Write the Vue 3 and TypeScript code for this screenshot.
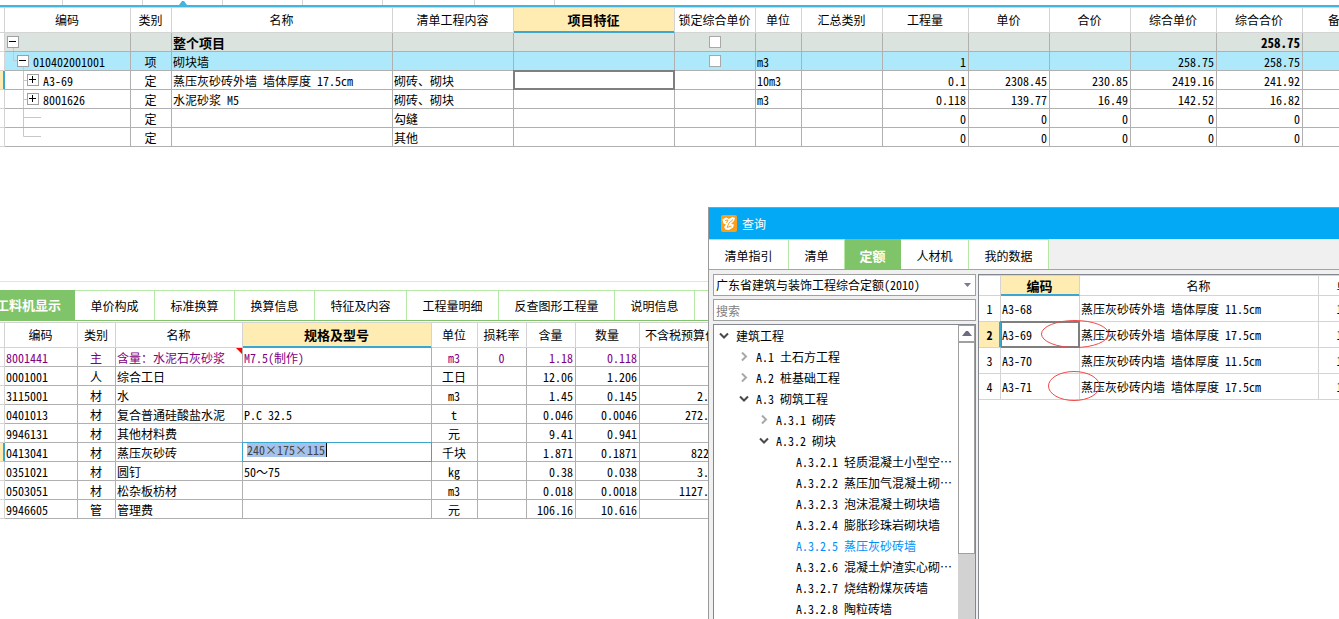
<script setup lang="ts">
import { ref } from 'vue'

interface Column {
  title: string
  align?: 'left' | 'center' | 'right'
  active?: boolean
}

interface BudgetRow {
  kind?: 'root' | 'item'
  level: number
  node: 'open' | 'closed' | 'leaf'
  guide: string
  code: string
  cells: string[]
  current?: boolean
  lockable?: boolean
}

interface MaterialRow {
  code: string
  cells: string[]
  tone?: string
  current?: boolean
}

interface TreeNode {
  label: string
  level: number
  state: 'open' | 'closed' | 'leaf'
  selected?: boolean
}

const stripTabs = ['a', 'b', 'c', 'd', 'e', 'f', 'g']

const budgetColumns: Column[] = [
  { title: '类别', align: 'center' },
  { title: '名称' },
  { title: '清单工程内容' },
  { title: '项目特征', active: true },
  { title: '锁定综合单价', align: 'center' },
  { title: '单位' },
  { title: '汇总类别' },
  { title: '工程量', align: 'right' },
  { title: '单价', align: 'right' },
  { title: '合价', align: 'right' },
  { title: '综合单价', align: 'right' },
  { title: '综合合价', align: 'right' },
  { title: '备注' },
]

const budgetRows: BudgetRow[] = [
  { kind: 'root', level: 0, node: 'open', guide: 'M8.5 15V18', code: '', lockable: true,
    cells: ['', '整个项目', '', '', '', '', '', '', '', '', '', '258.75', ''] },
  { kind: 'item', level: 1, node: 'open', guide: 'M8.5 0V8.5H12M18.5 15V18', code: '010402001001', lockable: true,
    cells: ['项', '砌块墙', '', '', '', 'm3', '', '1', '', '', '258.75', '258.75', ''] },
  { level: 2, node: 'closed', guide: 'M18.5 0V18M18.5 9.5H22', code: 'A3-69', current: true,
    cells: ['定', '蒸压灰砂砖外墙 墙体厚度 17.5cm', '砌砖、砌块', '', '', '10m3', '', '0.1', '2308.45', '230.85', '2419.16', '241.92', ''] },
  { level: 2, node: 'closed', guide: 'M18.5 0V18M18.5 9.5H22', code: '8001626',
    cells: ['定', '水泥砂浆 M5', '砌砖、砌块', '', '', 'm3', '', '0.118', '139.77', '16.49', '142.52', '16.82', ''] },
  { level: 2, node: 'leaf', guide: 'M18.5 0V18M18.5 8.5H36', code: '',
    cells: ['定', '', '勾缝', '', '', '', '', '0', '0', '0', '0', '0', ''] },
  { level: 2, node: 'leaf', guide: 'M18.5 0V8.5H36', code: '',
    cells: ['定', '', '其他', '', '', '', '', '0', '0', '0', '0', '0', ''] },
]

const detailTabs = ['工料机显示', '单价构成', '标准换算', '换算信息', '特征及内容', '工程量明细', '反查图形工程量', '说明信息']

const materialColumns: Column[] = [
  { title: '类别', align: 'center' },
  { title: '名称' },
  { title: '规格及型号', active: true },
  { title: '单位', align: 'center' },
  { title: '损耗率', align: 'center' },
  { title: '含量', align: 'right' },
  { title: '数量', align: 'right' },
  { title: '不含税预算价', align: 'right' },
]

const materialRows: MaterialRow[] = [
  { code: '8001441', tone: 'mix', cells: ['主', '含量：水泥石灰砂浆', 'M7.5(制作)', 'm3', '0', '1.18', '0.118', ''] },
  { code: '0001001', cells: ['人', '综合工日', '', '工日', '', '12.06', '1.206', ''] },
  { code: '3115001', cells: ['材', '水', '', 'm3', '', '1.45', '0.145', '2.80'] },
  { code: '0401013', cells: ['材', '复合普通硅酸盐水泥', 'P.C 32.5', 't', '', '0.046', '0.0046', '272.80'] },
  { code: '9946131', cells: ['材', '其他材料费', '', '元', '', '9.41', '0.941', ''] },
  { code: '0413041', current: true, cells: ['材', '蒸压灰砂砖', '', '千块', '', '1.871', '0.1871', '822.5'] },
  { code: '0351021', cells: ['材', '圆钉', '50～75', 'kg', '', '0.38', '0.038', '3.80'] },
  { code: '0503051', cells: ['材', '松杂板枋材', '', 'm3', '', '0.018', '0.0018', '1127.80'] },
  { code: '9946605', cells: ['管', '管理费', '', '元', '', '106.16', '10.616', ''] },
]

const queryTabs = ['清单指引', '清单', '定额', '人材机', '我的数据']

const treeNodes: TreeNode[] = [
  { label: '建筑工程', level: 0, state: 'open' },
  { label: 'A.1 土石方工程', level: 1, state: 'closed' },
  { label: 'A.2 桩基础工程', level: 1, state: 'closed' },
  { label: 'A.3 砌筑工程', level: 1, state: 'open' },
  { label: 'A.3.1 砌砖', level: 2, state: 'closed' },
  { label: 'A.3.2 砌块', level: 2, state: 'open' },
  { label: 'A.3.2.1 轻质混凝土小型空⋯', level: 3, state: 'leaf' },
  { label: 'A.3.2.2 蒸压加气混凝土砌⋯', level: 3, state: 'leaf' },
  { label: 'A.3.2.3 泡沫混凝土砌块墙', level: 3, state: 'leaf' },
  { label: 'A.3.2.4 膨胀珍珠岩砌块墙', level: 3, state: 'leaf' },
  { label: 'A.3.2.5 蒸压灰砂砖墙', level: 3, state: 'leaf', selected: true },
  { label: 'A.3.2.6 混凝土炉渣实心砌⋯', level: 3, state: 'leaf' },
  { label: 'A.3.2.7 烧结粉煤灰砖墙', level: 3, state: 'leaf' },
  { label: 'A.3.2.8 陶粒砖墙', level: 3, state: 'leaf' },
]

const quotaRows = [
  { code: 'A3-68', name: '蒸压灰砂砖外墙 墙体厚度 11.5cm' },
  { code: 'A3-69', name: '蒸压灰砂砖外墙 墙体厚度 17.5cm' },
  { code: 'A3-70', name: '蒸压灰砂砖内墙 墙体厚度 11.5cm' },
  { code: 'A3-71', name: '蒸压灰砂砖内墙 墙体厚度 17.5cm' },
]

const spec = ref('240×175×115')
const keyword = ref('')
const detailTab = ref('工料机显示')
const queryTab = ref('定额')
const currentQuota = ref('A3-69')
</script>

<template>
  <main class="page">
    <section class="budget">
      <div class="strip">
        <span v-for="(t, i) in stripTabs" :key="t" class="strip-tab" :class="'strip-' + t">
          <svg v-if="i === 2" class="marker" width="8" height="4" viewBox="0 0 8 4"><path d="M0 4L3 0H5L8 4Z" fill="#41b4e0" /></svg>
        </span>
      </div>
      <table class="grid budget-grid">
        <colgroup>
          <col class="w5" /><col class="w126" /><col class="w41" /><col class="w221" /><col class="w121" />
          <col class="w161" /><col class="w81" /><col class="w46" /><col class="w81" /><col class="w86" />
          <col class="w81" /><col class="w81" /><col class="w86" /><col class="w86" /><col class="w76" />
        </colgroup>
        <thead>
          <tr>
            <th></th>
            <th>编码</th>
            <th v-for="c in budgetColumns" :key="c.title" :class="{ active: c.active }">{{ c.title }}</th>
          </tr>
        </thead>
        <tbody>
          <tr v-for="(r, ri) in budgetRows" :key="ri" :class="[r.kind, { current: r.current }]">
            <td class="gutter"></td>
            <td class="node">
              <svg class="guide" width="60" height="18" viewBox="0 0 60 18"><path :d="r.guide" fill="none" stroke="#c8c8c8" /></svg>
              <div class="node-line" :class="'level-' + r.level">
                <button v-if="r.node !== 'leaf'" class="expander" type="button" :aria-label="r.node === 'open' ? '折叠' : '展开'">
                  <svg width="10" height="10" viewBox="0 0 10 10"><path :d="r.node === 'open' ? 'M1 4.5H8' : 'M1 4.5H8M4.5 1V8'" fill="none" stroke="#000" /></svg>
                </button>
                <span class="node-code">{{ r.code }}</span>
              </div>
            </td>
            <td v-for="(v, ci) in r.cells" :key="ci" :class="[budgetColumns[ci].align, { focus: r.current && budgetColumns[ci].active, check: r.lockable && ci === 4 }]">
              <input v-if="r.lockable && ci === 4" class="tick" type="checkbox" aria-label="锁定综合单价" />
              <template v-else>{{ v }}</template>
            </td>
          </tr>
        </tbody>
      </table>
    </section>

    <section class="detail">
      <nav class="tabs detail-tabs">
        <button v-for="(t, i) in detailTabs" :key="t" type="button" class="tab" :class="['dt-' + i, { on: t === detailTab }]" @click="detailTab = t">{{ t }}</button>
      </nav>
      <table class="grid material-grid">
        <colgroup>
          <col class="w5" /><col class="w73" /><col class="w38" /><col class="w127" /><col class="w189" />
          <col class="w46" /><col class="w49" /><col class="w49" /><col class="w64" /><col class="w84" />
        </colgroup>
        <thead>
          <tr>
            <th></th>
            <th>编码</th>
            <th v-for="c in materialColumns" :key="c.title" :class="{ active: c.active }">{{ c.title }}</th>
          </tr>
        </thead>
        <tbody>
          <tr v-for="r in materialRows" :key="r.code" :class="[r.tone, { current: r.current }]">
            <td class="gutter"></td>
            <td>{{ r.code }}</td>
            <td v-for="(v, ci) in r.cells" :key="ci" :class="[materialColumns[ci].align, { edit: r.current && ci === 2, note: r.tone && ci === 1 }]">
              <input v-if="r.current && ci === 2" v-model="spec" class="spec" type="text" aria-label="规格及型号" />
              <template v-else>{{ v }}</template>
            </td>
          </tr>
        </tbody>
      </table>
    </section>

    <section class="dialog" role="dialog" aria-label="查询">
      <header class="title">
        <svg width="16" height="17" viewBox="0 0 16 17">
          <rect width="16" height="17" rx="2" fill="#f8a01c" />
          <path d="M1.5 4.5L5 2.5L8 4L11.5 2L14 3L13 6L10 9L13 9.5L12 12.5L8 15L4.5 14.5L3 12L5 9.5L2.5 8.5Z" fill="#fff" />
          <path d="M4 5.5L7 5L5.5 8M12 4.5L8 8L6 12.5L10.5 11" fill="none" stroke="#f8a01c" />
        </svg>
        <span>查询</span>
      </header>
      <nav class="tabs query-tabs">
        <button v-for="(t, i) in queryTabs" :key="t" type="button" class="tab" :class="['qt-' + i, { on: t === queryTab }]" @click="queryTab = t">{{ t }}</button>
      </nav>
      <div class="body">
        <div class="side">
          <div class="combo">
            <select aria-label="定额库">
              <option>广东省建筑与装饰工程综合定额(2010)</option>
            </select>
            <svg width="7" height="4" viewBox="0 0 7 4"><path d="M0 0H7L3.5 4Z" fill="#7a7a8a" /></svg>
          </div>
          <input v-model="keyword" class="search" type="text" placeholder="搜索" aria-label="搜索" />
          <div class="tree-box">
            <ul class="tree">
              <li v-for="n in treeNodes" :key="n.label" :class="['depth-' + n.level, { picked: n.selected }]">
                <svg class="chev" width="10" height="10" viewBox="0 0 10 10">
                  <path v-if="n.state === 'open'" d="M1 2.5L5 6.5L9 2.5" fill="none" stroke="#4a4a4a" stroke-width="2" />
                  <path v-else-if="n.state === 'closed'" d="M3 0.5L7 4.5L3 8.5" fill="none" stroke="#a8a8a8" stroke-width="2" />
                </svg>
                <span>{{ n.label }}</span>
              </li>
            </ul>
            <div class="bar">
              <button class="bar-up" type="button" aria-label="向上滚动">
                <svg width="10" height="5" viewBox="0 0 10 5"><path d="M0 5L4 0H6L10 5Z" fill="#6c6c80" /></svg>
              </button>
              <div class="thumb"></div>
            </div>
          </div>
        </div>
        <div class="results">
          <table class="grid quota-grid">
            <colgroup><col class="w22" /><col class="w79" /><col class="w239" /><col class="w61" /></colgroup>
            <thead>
              <tr>
                <th></th>
                <th class="active">编码</th>
                <th>名称</th>
                <th>单位</th>
              </tr>
            </thead>
            <tbody>
              <tr v-for="(q, i) in quotaRows" :key="q.code" :class="{ current: q.code === currentQuota }" @click="currentQuota = q.code">
                <td class="gutter center">{{ i + 1 }}</td>
                <td :class="{ focus: q.code === currentQuota }">{{ q.code }}</td>
                <td>{{ q.name }}</td>
                <td class="center">10m3</td>
              </tr>
            </tbody>
          </table>
          <svg class="marks" width="70" height="84" viewBox="0 0 70 84">
            <ellipse cx="34" cy="15" rx="33.5" ry="13.5" fill="none" stroke="#ee4a4a" />
            <ellipse cx="33" cy="67" rx="25.5" ry="14.5" fill="none" stroke="#ee4a4a" />
          </svg>
        </div>
      </div>
    </section>
  </main>
</template>

<style>
body {
  margin: 0;
  background: #fff;
}
</style>

<style scoped>
.page {
  position: relative;
  min-height: 100vh;
  overflow: hidden;
  background: #fff;
  color: #000;
  font: 12px/18px "Noto Sans Mono CJK SC", "Noto Sans CJK SC", sans-serif;
}
.page * {
  box-sizing: border-box;
}
button,
input,
select {
  margin: 0;
  padding: 0;
  border: 0;
  border-radius: 0;
  background: transparent;
  color: inherit;
  font: inherit;
  appearance: none;
}
svg {
  display: block;
  flex: none;
}

/* upper tab strip */
.strip {
  display: flex;
  height: 7px;
  border-bottom: 2px solid #41b4e0;
}
.strip-tab {
  display: flex;
  justify-content: center;
  align-items: flex-end;
  flex: none;
  width: 80px;
  border-right: 1px solid #d4d4d4;
}
.strip-a {
  width: 63px;
}
.strip-f {
  width: 92px;
}

/* grids */
.grid {
  table-layout: fixed;
  border-collapse: separate;
  border-spacing: 0;
  border-top: 1px solid #d4d4d4;
}
.budget-grid {
  width: 1379px;
}
.material-grid {
  width: 724px;
}
.quota-grid {
  width: 401px;
}
.w5 { width: 5px; }
.w22 { width: 22px; }
.w38 { width: 38px; }
.w41 { width: 41px; }
.w46 { width: 46px; }
.w49 { width: 49px; }
.w61 { width: 61px; }
.w64 { width: 64px; }
.w73 { width: 73px; }
.w76 { width: 76px; }
.w79 { width: 79px; }
.w81 { width: 81px; }
.w84 { width: 84px; }
.w86 { width: 86px; }
.w121 { width: 121px; }
.w126 { width: 126px; }
.w127 { width: 127px; }
.w161 { width: 161px; }
.w189 { width: 189px; }
.w221 { width: 221px; }
.w239 { width: 239px; }
th {
  height: 25px;
  padding: 0 1px 0 0;
  border-right: 1px solid #d4d4d4;
  border-bottom: 1px solid #d4d4d4;
  font-weight: 400;
  text-align: center;
  white-space: nowrap;
}
th.active {
  background: #ffecb3;
  border-bottom-color: #3ba6d0;
  box-shadow: inset 0 -1px #3ba6d0;
  font-size: 13px;
  font-weight: 700;
}
td {
  position: relative;
  height: 19px;
  padding: 2px 2px 0 1px;
  border-right: 1px solid #b0b0b0;
  border-bottom: 1px solid #b0b0b0;
  line-height: 16px;
  text-align: left;
  white-space: nowrap;
}
td.center {
  text-align: center;
}
td.right {
  text-align: right;
}
td.gutter {
  padding: 0;
  border-color: #d4d4d4;
}
td.check {
  padding-top: 0;
}
.current .gutter {
  background: #ffecb3;
  border-right-color: #3ba6d0;
  box-shadow: inset -1px 0 #3ba6d0;
}
.root td:not(.gutter) {
  background: #dae3de;
  font-size: 13px;
  font-weight: 700;
}
.item td:not(.gutter) {
  background: #aee9fb;
}
td.focus::after,
td.edit::after {
  content: "";
  position: absolute;
  z-index: 1;
  inset: -1px;
  border: 2px solid #7f7f7f;
  pointer-events: none;
}
td.edit {
  padding: 0 2px;
}
td.edit::after {
  border: 1px solid #3ba6d0;
}
td.node {
  padding: 0;
}
.guide {
  position: absolute;
  top: 0;
  left: 0;
}
.node-line {
  position: relative;
  display: flex;
  align-items: center;
  gap: 4px;
  height: 18px;
}
.node-code {
  padding-top: 2px;
}
.level-0 { padding-left: 2px; }
.level-1 { padding-left: 12px; }
.level-2 { padding-left: 22px; }
.expander {
  width: 12px;
  height: 12px;
  border: 1px solid #a0a0a0;
  background: #fff;
}
.tick {
  display: block;
  width: 12px;
  height: 12px;
  margin: 0 auto;
  border: 1px solid #a8a8a8;
  background: #fff;
}
.tick:checked {
  background: #3ba6d0;
}

/* lower panel */
.detail {
  margin-top: 134px;
  padding-top: 8px;
  border-top: 1px solid #e2e2e2;
}
.tabs {
  display: flex;
  height: 31px;
  border-top: 1px solid #b5e8a4;
  border-bottom: 1px solid #7fc469;
}
.tab {
  flex: none;
  width: 80px;
  border-right: 1px solid #b5e8a4;
  background: #fff;
  text-align: center;
  white-space: nowrap;
}
.tab.on {
  margin-top: -1px;
  border-right-color: #7fc469;
  background: #7fc469;
  color: #fff;
  font-size: 13px;
  font-weight: 700;
}
.dt-0 {
  width: 92px;
  margin-left: -17px;
}
.dt-4,
.dt-5 {
  width: 92px;
}
.dt-6 {
  width: 116px;
}
.material-grid {
  margin-top: 1px;
}
.mix td {
  color: #800080;
}
td.note::after {
  content: "";
  position: absolute;
  top: 0;
  right: 0;
  border-top: 6px solid #f00;
  border-left: 6px solid transparent;
}
.spec {
  display: block;
  width: 80px;
  height: 14px;
  margin: 0 2px 4px;
  border-right: 1px solid #000;
  background: #a4c2ea;
  color: #444;
  line-height: 14px;
  field-sizing: content;
}

/* query window */
.dialog {
  position: absolute;
  z-index: 2;
  top: 207px;
  right: 0;
  bottom: 0;
  left: 708px;
  display: flex;
  flex-direction: column;
  overflow: hidden;
  border-top: 1px solid #9a9a9a;
  border-left: 1px solid #9a9a9a;
  background: #f0f0f0;
}
.title {
  display: flex;
  flex: none;
  align-items: center;
  gap: 5px;
  height: 31px;
  padding-left: 12px;
  background: #03a9f4;
  color: #fff;
}
.query-tabs {
  flex: none;
  border-top-color: #f0f0f0;
}
.query-tabs .tab {
  margin-top: -1px;
  padding-top: 2px;
  border-top: 1px solid #b5e8a4;
}
.query-tabs .on {
  border-color: #7fc469;
}
.qt-1,
.qt-2 {
  width: 56px;
}
.qt-3 {
  width: 68px;
}
.body {
  display: flex;
  flex: 1;
  gap: 2px;
  min-height: 0;
  padding: 4px 0 0 4px;
}
.side {
  display: flex;
  flex: none;
  flex-direction: column;
  gap: 3px;
  width: 263px;
}
.combo {
  display: flex;
  flex: none;
  align-items: center;
  height: 22px;
  padding: 0 4px 0 2px;
  border: 1px solid #a0a0a0;
  background: #fff;
}
.combo select {
  flex: 1;
  height: 20px;
}
.search {
  flex: none;
  height: 22px;
  padding: 0 2px;
  border: 1px solid #a0a0a0;
  background: #fff;
}
.search::placeholder {
  color: #808080;
}
.tree-box {
  display: flex;
  flex: 1;
  min-height: 0;
  overflow: hidden;
  border: 1px solid #828790;
  border-bottom: 0;
  background: #fff;
}
.tree {
  flex: 1;
  min-width: 0;
  margin: 0;
  padding: 0;
  list-style: none;
}
.tree li {
  display: flex;
  align-items: center;
  gap: 7px;
  height: 21px;
  white-space: nowrap;
}
.depth-0 { padding-left: 5px; }
.depth-1 { padding-left: 25px; }
.depth-2 { padding-left: 45px; }
.depth-3 { padding-left: 65px; }
.tree .picked {
  color: #0090f8;
}
.bar {
  display: flex;
  flex: none;
  flex-direction: column;
  width: 17px;
  background: #d2d2d2;
}
.bar-up {
  display: flex;
  flex: none;
  align-items: center;
  justify-content: center;
  height: 17px;
  border: 1px solid #a0a0a0;
  background: #fff;
}
.thumb {
  flex: none;
  height: 72%;
  border: 1px solid #a0a0a0;
  background: #fff;
}
.results {
  position: relative;
  flex: 1;
  min-width: 0;
  overflow: hidden;
  border-top: 1px solid #828790;
  border-left: 1px solid #828790;
  background: #fff;
}
.quota-grid th {
  height: 20px;
}
.quota-grid td {
  height: 26px;
  padding-top: 0;
  border-color: #d4d4d4;
}
.quota-grid .current .gutter {
  z-index: 2;
  border-right-color: #3ba6d0;
  font-weight: 700;
}
.marks {
  position: absolute;
  z-index: 3;
  top: 44px;
  left: 62px;
}
</style>
